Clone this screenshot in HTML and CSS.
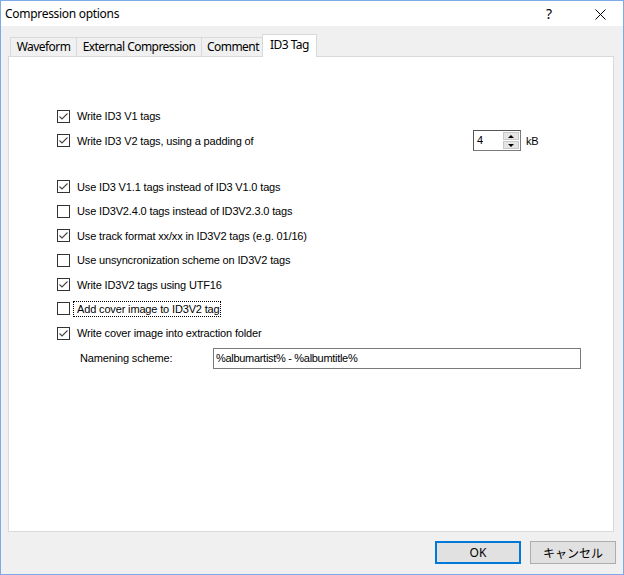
FILE: index.html
```html
<!DOCTYPE html>
<html>
<head>
<meta charset="utf-8">
<link rel="stylesheet" href="styles.css">
</head>
<body>
<div class="window">
  <div class="titlebar">
    <span class="title">Compression options</span>
    <span class="help">?</span>
    <span class="close">
      <svg width="11" height="11" viewBox="0 0 11 11"><path d="M0.5 0.5 L10.5 10.5 M10.5 0.5 L0.5 10.5" stroke="#000" stroke-width="1" fill="none"/></svg>
    </span>
  </div>
  <div class="client">
    <div class="tabs">
      <div class="tab tab-wave">Waveform</div>
      <div class="tab tab-ext">External Compression</div>
      <div class="tab tab-comment">Comment</div>
      <div class="tab tab-id3 active">ID3 Tag</div>
    </div>
    <div class="panel">
      <div class="group group1">
        <div class="row">
          <span class="cb checked"><svg width="13" height="13" viewBox="0 0 13 13"><rect x="0.5" y="0.5" width="12" height="12" fill="#fff" stroke="#333"/><polyline points="2.5,6.5 5,9 10.5,3.5" fill="none" stroke="#444" stroke-width="1.1"/></svg></span>
          <span class="label">Write ID3 V1 tags</span>
        </div>
        <div class="row row-spin">
          <div class="cbcell">
            <span class="cb checked"><svg width="13" height="13" viewBox="0 0 13 13"><rect x="0.5" y="0.5" width="12" height="12" fill="#fff" stroke="#333"/><polyline points="2.5,6.5 5,9 10.5,3.5" fill="none" stroke="#444" stroke-width="1.1"/></svg></span>
            <span class="label">Write ID3 V2 tags, using a padding of</span>
          </div>
          <div class="spin-group">
            <div class="spin">
              <span class="spin-value">4</span>
              <span class="spin-btns">
                <span class="spin-btn"><span class="arrow-up"></span></span>
                <span class="spin-btn"><span class="arrow-down"></span></span>
              </span>
            </div>
            <span class="unit">kB</span>
          </div>
        </div>
      </div>
      <div class="group group2">
        <div class="row">
          <span class="cb checked"><svg width="13" height="13" viewBox="0 0 13 13"><rect x="0.5" y="0.5" width="12" height="12" fill="#fff" stroke="#333"/><polyline points="2.5,6.5 5,9 10.5,3.5" fill="none" stroke="#444" stroke-width="1.1"/></svg></span>
          <span class="label">Use ID3 V1.1 tags instead of ID3 V1.0 tags</span>
        </div>
        <div class="row">
          <span class="cb"><svg width="13" height="13" viewBox="0 0 13 13"><rect x="0.5" y="0.5" width="12" height="12" fill="#fff" stroke="#333"/></svg></span>
          <span class="label">Use ID3V2.4.0 tags instead of ID3V2.3.0 tags</span>
        </div>
        <div class="row">
          <span class="cb checked"><svg width="13" height="13" viewBox="0 0 13 13"><rect x="0.5" y="0.5" width="12" height="12" fill="#fff" stroke="#333"/><polyline points="2.5,6.5 5,9 10.5,3.5" fill="none" stroke="#444" stroke-width="1.1"/></svg></span>
          <span class="label">Use track format xx/xx in ID3V2 tags (e.g. 01/16)</span>
        </div>
        <div class="row">
          <span class="cb"><svg width="13" height="13" viewBox="0 0 13 13"><rect x="0.5" y="0.5" width="12" height="12" fill="#fff" stroke="#333"/></svg></span>
          <span class="label">Use unsyncronization scheme on ID3V2 tags</span>
        </div>
        <div class="row">
          <span class="cb checked"><svg width="13" height="13" viewBox="0 0 13 13"><rect x="0.5" y="0.5" width="12" height="12" fill="#fff" stroke="#333"/><polyline points="2.5,6.5 5,9 10.5,3.5" fill="none" stroke="#444" stroke-width="1.1"/></svg></span>
          <span class="label">Write ID3V2 tags using UTF16</span>
        </div>
        <div class="row">
          <span class="cb"><svg width="13" height="13" viewBox="0 0 13 13"><rect x="0.5" y="0.5" width="12" height="12" fill="#fff" stroke="#333"/></svg></span>
          <span class="label focused">Add cover image to ID3V2 tag</span>
        </div>
        <div class="row">
          <span class="cb checked"><svg width="13" height="13" viewBox="0 0 13 13"><rect x="0.5" y="0.5" width="12" height="12" fill="#fff" stroke="#333"/><polyline points="2.5,6.5 5,9 10.5,3.5" fill="none" stroke="#444" stroke-width="1.1"/></svg></span>
          <span class="label">Write cover image into extraction folder</span>
        </div>
      </div>
      <div class="naming">
        <span class="naming-label">Namening scheme:</span>
        <div class="textbox">%albumartist% - %albumtitle%</div>
      </div>
    </div>
    <div class="buttons">
      <div class="btn btn-default">OK</div>
      <div class="btn">キャンセル</div>
    </div>
  </div>
</div>
</body>
</html>
```

FILE: styles.css
```css
html, body {
  margin: 0;
  padding: 0;
  background: #ffffff;
}

.window {
  box-sizing: border-box;
  width: 624px;
  height: 575px;
  border: 1px solid #7eaae8;
  display: flex;
  flex-direction: column;
  background: #f0f0f0;
  font-family: "Liberation Sans", Arial, sans-serif;
  color: #000;
}

.titlebar {
  height: 25px;
  background: #ffffff;
  display: flex;
  align-items: center;
  font-family: "Noto Sans", "Open Sans", sans-serif;
  font-size: 12px;
  letter-spacing: -0.3px;
}

.title {
  margin-left: 4px;
  flex: 1;
  padding-bottom: 1px;
}

.help {
  font-size: 14px;
  width: 12px;
  margin-right: 37px;
  font-weight: 400;
  padding-bottom: 1px;
}

.close {
  width: 11px;
  height: 11px;
  margin-right: 17px;
  display: flex;
  margin-top: 2px;
}

.client {
  flex: 1;
  display: flex;
  flex-direction: column;
  padding-top: 8px;
}

.tabs {
  display: flex;
  align-items: flex-end;
  height: 23px;
  padding-left: 9px;
  font-family: "Noto Sans", "Open Sans", sans-serif;
  font-size: 12px;
  letter-spacing: -0.55px;
}

.tab {
  box-sizing: border-box;
  height: 20px;
  border: 1px solid #d9d9d9;
  border-bottom: none;
  background: #f0f0f0;
  text-align: center;
  line-height: 18px;
  margin-left: -1px;
  white-space: nowrap;
}

.tab-wave { width: 67px; margin-left: 0; }
.tab-ext { width: 126px; }
.tab-comment { width: 64px; }
.tab-id3 { width: 51px; }

.tab.active {
  position: relative;
  z-index: 2;
  height: 23px;
  width: 55px;
  margin-left: -3px;
  margin-right: -2px;
  background: #ffffff;
  line-height: 20px;
}

.panel {
  box-sizing: border-box;
  height: 476px;
  margin: -1px 9px 0 7px;
  background: #ffffff;
  border: 1px solid #d9d9d9;
  padding-left: 48px;
  font-size: 11px;
  letter-spacing: -0.15px;
}

.group1 {
  padding-top: 47.3px;
}

.group2 {
  padding-top: 21.7px;
}

.row {
  height: 24.4px;
  display: flex;
  align-items: center;
}

.cb {
  width: 13px;
  height: 13px;
  display: flex;
  flex: none;
}

.label {
  margin-left: 7px;
  white-space: nowrap;
}

.label.focused {
  margin-left: 3px;
  padding: 1px 0 1px 3px;
  border: 1px dotted #000;
  line-height: 12px;
}

.row-spin {
  display: grid;
  grid-template-columns: 416px auto;
  align-items: center;
}

.cbcell {
  display: flex;
  align-items: center;
}

.spin-group {
  display: flex;
  align-items: center;
}

.spin {
  box-sizing: border-box;
  width: 48px;
  height: 21px;
  border: 1px solid #7a7a7a;
  border-top-color: #555;
  border-left-color: #555;
  background: #fff;
  display: flex;
}

.spin-value {
  flex: 1;
  padding-left: 3px;
  line-height: 19px;
}

.spin-btns {
  width: 17px;
  display: flex;
  flex-direction: column;
  padding: 1px 1px 1px 0;
  box-sizing: border-box;
  gap: 1px;
}

.spin-btn {
  flex: 1;
  background: #e5e5e5;
  border: 1px solid #c8c8c8;
  display: flex;
  align-items: center;
  justify-content: center;
}

.arrow-up {
  width: 0;
  height: 0;
  border-left: 3px solid transparent;
  border-right: 3px solid transparent;
  border-bottom: 3px solid #000;
}

.arrow-down {
  width: 0;
  height: 0;
  border-left: 3px solid transparent;
  border-right: 3px solid transparent;
  border-top: 3px solid #000;
}

.unit {
  margin-left: 5px;
}

.naming {
  display: flex;
  align-items: center;
  margin-top: 2.4px;
  height: 21px;
}

.naming-label {
  margin-left: 23px;
  width: 133px;
}

.textbox {
  box-sizing: border-box;
  width: 368px;
  height: 21px;
  border: 1px solid #7a7a7a;
  padding-left: 2px;
  line-height: 19px;
  white-space: nowrap;
  letter-spacing: -0.3px;
}

.buttons {
  display: flex;
  justify-content: flex-end;
  gap: 9px;
  margin-top: 9px;
  padding-right: 7px;
}

.btn {
  box-sizing: border-box;
  width: 86px;
  height: 23px;
  border: 1px solid #adadad;
  background: #e1e1e1;
  display: flex;
  align-items: center;
  justify-content: center;
  font-family: "Noto Sans", "Noto Sans CJK JP", sans-serif;
  font-size: 12px;
}

.btn-default {
  border: 2px solid #0078d7;
}
```
